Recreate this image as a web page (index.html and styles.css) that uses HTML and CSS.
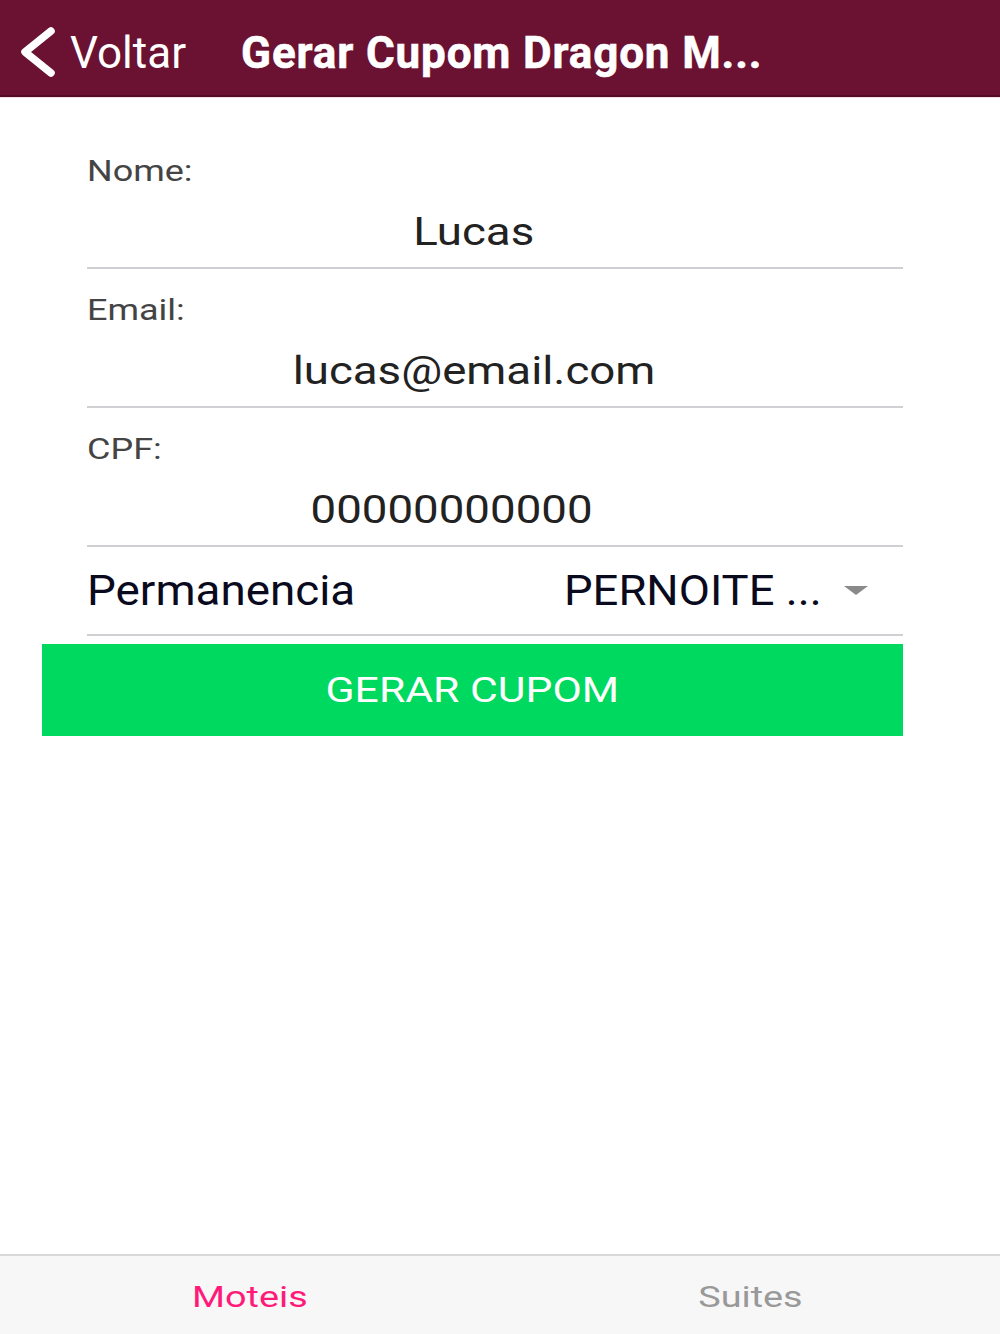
FILE: index.html
```html
<!DOCTYPE html>
<html lang="pt">
<head>
<meta charset="utf-8">
<title>Gerar Cupom</title>
<link rel="stylesheet" href="styles.css">
</head>
<body>
<div class="app">
  <header class="navbar">
    <div class="back">
      <svg class="chev" width="40" height="50" viewBox="0 0 40 50"><polyline points="33,4 7,25 33,46" fill="none" stroke="#fff" stroke-width="7.5" stroke-linecap="round" stroke-linejoin="round"/></svg>
      <span class="back-text">Voltar</span>
    </div>
    <div class="title">Gerar Cupom Dragon M...</div>
  </header>
  <main class="content">
    <div class="field">
      <div class="label"><span class="wide-l">Nome:</span></div>
      <div class="value"><span class="wide-c">Lucas</span></div>
    </div>
    <div class="field">
      <div class="label"><span class="wide-l">Email:</span></div>
      <div class="value"><span class="wide-c">lucas@email.com</span></div>
    </div>
    <div class="field">
      <div class="label"><span class="wide-l">CPF:</span></div>
      <div class="value cpf"><span class="wide-c">00000000000</span></div>
    </div>
    <div class="select-row">
      <span class="select-label">Permanencia</span>
      <span class="select-value">PERNOITE ...</span>
      <span class="caret"></span>
    </div>
    <button class="btn"><span class="btn-text">GERAR CUPOM</span></button>
  </main>
  <nav class="tabbar">
    <div class="tab active"><span class="tab-text">Moteis</span></div>
    <div class="tab"><span class="tab-text">Suites</span></div>
  </nav>
</div>
</body>
</html>
```
FILE: styles.css
```css
html, body {
  margin: 0;
  padding: 0;
  background: #fff;
}
body {
  font-family: Roboto, "Liberation Sans", sans-serif;
}
.app {
  display: flex;
  flex-direction: column;
  height: 1334px;
  width: 1000px;
}
.navbar {
  height: 85px;
  padding-top: 10px;
  background: #6b1131;
  border-bottom: 2px solid #560c26;
  box-shadow: 0 1px 0 #f1dfe5;
  display: flex;
  align-items: center;
  padding-left: 18px;
  color: #fff;
  flex-shrink: 0;
}
.back {
  display: flex;
  align-items: center;
}
.chev {
  display: block;
  margin-top: -2px;
}
.back-text {
  font-size: 44px;
  margin-left: 12px;
}
.title {
  font-size: 44px;
  font-weight: 700;
  margin-left: 55px;
  letter-spacing: 0.85px;
  -webkit-text-stroke: 0.6px #fff;
}
.content {
  flex: 1;
  padding: 33px 97px 0 42px;
}
.field {
  margin-left: 45px;
  padding: 23px 0 12px;
  border-bottom: 2px solid #d0d0d4;
}
.label {
  font-size: 30px;
  line-height: 36px;
  color: #444;
}
.wide-l {
  display: inline-block;
  transform: scaleX(1.2);
  transform-origin: left center;
}
.value {
  margin-top: 20px;
  font-size: 39px;
  line-height: 46px;
  color: #222;
  text-align: center;
  padding-right: 42px;
}
.wide-c {
  display: inline-block;
  transform: scaleX(1.17);
  transform-origin: center center;
}
.value.cpf {
  padding-right: 86px;
}
.select-row {
  margin-left: 45px;
  height: 87px;
  border-bottom: 2px solid #d0d0d4;
  display: flex;
  align-items: center;
  font-size: 42px;
  color: #0a0a1e;
}
.select-label {
  flex: 1;
  display: inline-block;
  transform: scaleX(1.09);
  transform-origin: left center;
}
.select-value {
  display: inline-block;
  transform: scaleX(1.08);
  transform-origin: left center;
}
.caret {
  width: 0;
  height: 0;
  border-left: 12px solid transparent;
  border-right: 12px solid transparent;
  border-top: 9px solid #8a8a8a;
  margin-left: 41px;
  margin-right: 35px;
}
.btn {
  display: block;
  margin-top: 8px;
  width: 861px;
  height: 92px;
  border: none;
  background: #00d95f;
  color: #fff;
  font-family: Roboto, "Liberation Sans", sans-serif;
  font-size: 35px;
  padding: 0;
}
.btn-text {
  display: inline-block;
  transform: scaleX(1.22);
}
.tabbar {
  height: 78px;
  flex-shrink: 0;
  background: #f7f7f7;
  border-top: 2px solid #d8d8d8;
  display: flex;
}
.tab {
  flex: 1;
  display: flex;
  align-items: center;
  justify-content: center;
  font-size: 30px;
  color: #999;
  padding-top: 3px;
}
.tab-text {
  display: inline-block;
  transform: scaleX(1.26);
}
.tab.active {
  color: #ff1a7a;
}
```
